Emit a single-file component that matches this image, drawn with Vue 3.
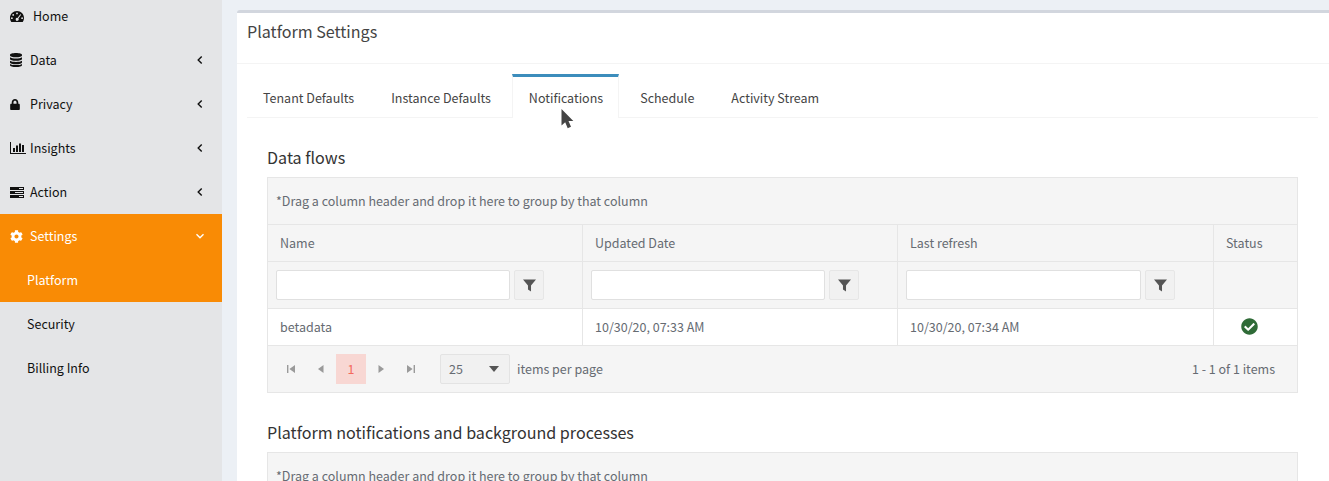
<template>
  <div class="layout">
    <aside class="sidebar">
      <ul class="menu">
        <li v-for="item in menu" :key="item.label" class="menu-item" :class="{ open: item.open, 'home-item': item.icon === 'home' }">
          <svg class="menu-icon" :viewBox="icons[item.icon].box" :style="{ width: icons[item.icon].w + 'px', height: icons[item.icon].h + 'px' }">
            <path :d="icons[item.icon].d" fill="currentColor" fill-rule="evenodd" />
          </svg>
          <span class="menu-label">{{ item.label }}</span>
          <svg v-if="item.arrow" class="menu-arrow" viewBox="0 0 10 10">
            <path :d="item.open ? 'M1.5 3.2 5 6.7 8.5 3.2' : 'M6.7 1.5 3.2 5 6.7 8.5'" fill="none" stroke="currentColor" stroke-width="1.4" />
          </svg>
        </li>
        <li v-for="sub in submenu" :key="sub" class="sub-item" :class="{ current: sub === 'Platform' }">{{ sub }}</li>
      </ul>
    </aside>

    <main class="content">
      <section class="box">
        <header class="box-header">Platform Settings</header>
        <div class="box-body">
          <nav class="tabs">
            <a v-for="tab in tabs" :key="tab" class="tab" :class="{ active: tab === 'Notifications' }">{{ tab }}</a>
          </nav>

          <div class="tab-pane">
            <h3 class="section-title">Data flows</h3>
            <div class="grid">
              <div class="group-hint">*Drag a column header and drop it here to group by that column</div>
              <div class="row head-row">
                <div v-for="col in columns" :key="col" class="cell">{{ col }}</div>
                <div class="cell">Status</div>
              </div>
              <div class="row filter-row">
                <div v-for="col in columns" :key="col" class="cell filter-cell">
                  <input class="filter-input" type="text" />
                  <button class="filter-btn">
                    <svg viewBox="0 0 12 12" width="13" height="13"><path d="M0 .5h12L7.4 6v5.5L4.6 9.6V6z" fill="#555" /></svg>
                  </button>
                </div>
                <div class="cell"></div>
              </div>
              <div class="row data-row">
                <div class="cell">betadata</div>
                <div class="cell">10/30/20, 07:33 AM</div>
                <div class="cell">10/30/20, 07:34 AM</div>
                <div class="cell status-cell">
                  <svg viewBox="0 0 512 512" width="17" height="17"><path :d="checkCircle" fill="#2f6b37" /></svg>
                </div>
              </div>
              <div class="pager">
                <div class="pager-nav">
                  <span class="page-icon"><svg viewBox="0 0 10 10"><path d="M1 1h1.4v8H1zM9 1v8L3.4 5z" /></svg></span>
                  <span class="page-icon"><svg viewBox="0 0 10 10"><path d="M7.5 1v8L2 5z" /></svg></span>
                  <span class="page-num">1</span>
                  <span class="page-icon"><svg viewBox="0 0 10 10"><path d="M2.5 1v8L8 5z" /></svg></span>
                  <span class="page-icon"><svg viewBox="0 0 10 10"><path d="M9 1H7.6v8H9zM1 1v8L6.6 5z" /></svg></span>
                </div>
                <div class="page-size">
                  <span class="pager-text">25</span>
                  <svg viewBox="0 0 10 6" width="10" height="6"><path d="M0 0h10L5 6z" fill="#555" /></svg>
                </div>
                <span class="per-page pager-text">items per page</span>
                <span class="page-info pager-text">1 - 1 of 1 items</span>
              </div>
            </div>

            <h3 class="section-title">Platform notifications and background processes</h3>
            <div class="grid">
              <div class="group-hint">*Drag a column header and drop it here to group by that column</div>
            </div>
          </div>
        </div>
      </section>
    </main>

    <svg class="cursor" viewBox="0 0 13 21" width="13" height="21">
      <path d="M.5 0v16.5l3.7-3.3 2.5 6 3.3-1.4-2.500-5.700 4.800-.2z" fill="#444" />
    </svg>
  </div>
</template>

<script setup>
const checkCircle = 'M504 256c0 136.967-111.033 248-248 248S8 392.967 8 256 119.033 8 256 8s248 111.033 248 248zM227.314 387.314l184-184c6.248-6.248 6.248-16.379 0-22.627l-22.627-22.627c-6.248-6.249-16.379-6.249-22.628 0L216 308.118l-70.059-70.059c-6.248-6.248-16.379-6.248-22.628 0l-22.627 22.627c-6.248 6.248-6.248 16.379 0 22.627l104 104c6.249 6.249 16.379 6.249 22.628.001z'

const icons = {
  home: {
    box: '0 0 14 11',
    w: 14,
    h: 11,
    d: 'M7 0C3.100 0 0 3.100 0 7c0 1.400.4 2.700 1.100 3.700.1.2.4.3.6.3h10.600c.2 0 .5-.1.6-.3C13.600 9.700 14 8.400 14 7c0-3.900-3.100-7-7-7zM7 1.500a.9.9 0 1 1 0 1.800.9.9 0 0 1 0-1.800zM3.200 3a.9.9 0 1 1 0 1.800.9.9 0 0 1 0-1.800zM1.900 6.300a.9.9 0 1 1 0 1.800.9.9 0 0 1 0-1.800zM12.100 6.300a.9.9 0 1 1 0 1.800.9.9 0 0 1 0-1.800zM10.300 3.300l.8.5-2.700 3.700a1.500 1.500 0 1 1-.9-.6z'
  },
  data: {
    box: '0 0 12 14',
    w: 12,
    h: 14,
    d: 'M6 0c3.300 0 6 .8 6 1.800v.7c0 1-2.700 1.800-6 1.800S0 3.500 0 2.500v-.7C0 .8 2.700 0 6 0zM0 4.300c1 .8 3.500 1.200 6 1.200s5-.4 6-1.200v1.700c0 1-2.700 1.800-6 1.800S0 7 0 6zM0 7.700c1 .8 3.500 1.200 6 1.200s5-.4 6-1.200v1.700c0 1-2.700 1.800-6 1.800S0 10.400 0 9.400zM0 10.900c1 .8 3.500 1.200 6 1.200s5-.4 6-1.200v1.300c0 1-2.700 1.800-6 1.800s-6-.8-6-1.800z'
  },
  privacy: {
    box: '0 0 448 512',
    w: 10,
    h: 11,
    d: 'M400 224h-24v-72C376 68.200 307.800 0 224 0S72 68.200 72 152v72H48c-26.500 0-48 21.500-48 48v192c0 26.500 21.500 48 48 48h352c26.500 0 48-21.500 48-48V272c0-26.500-21.500-48-48-48zm-104 0H152v-72c0-39.700 32.300-72 72-72s72 32.300 72 72v72z'
  },
  insights: {
    box: '0 0 16 12',
    w: 16,
    h: 12,
    d: 'M0 0h1v11h15v1H0zM3 6h2v4H3zM6 3.500h2V10H6zM9 1.500h2V10H9zM12 3h2v7h-2z'
  },
  action: {
    box: '0 0 14 11',
    w: 14,
    h: 11,
    d: 'M0 0h14v3H0zM9 1v1h4V1zM0 4h14v3H0zM5 5v1h8V5zM0 8h14v3H0zM9 9v1h4V9z'
  },
  settings: {
    box: '0 0 512 512',
    w: 13,
    h: 13,
    d: 'M487.400 315.700l-42.600-24.600c4.300-23.200 4.300-47 0-70.200l42.600-24.600c4.900-2.800 7.100-8.600 5.500-14-11.100-35.600-30-67.800-54.700-94.600-3.800-4.100-10-5.100-14.800-2.300L380.800 110c-17.900-15.400-38.500-27.300-60.800-35.100V25.800c0-5.600-3.900-10.500-9.400-11.700-36.700-8.200-74.300-7.800-109.200 0-5.500 1.200-9.400 6.100-9.400 11.700V75c-22.200 7.900-42.800 19.800-60.800 35.100L88.700 85.500c-4.900-2.800-11-1.900-14.800 2.300-24.700 26.700-43.600 58.900-54.700 94.600-1.700 5.400.6 11.200 5.500 14L67.300 221c-4.300 23.200-4.300 47 0 70.200l-42.600 24.600c-4.900 2.800-7.100 8.600-5.500 14 11.100 35.600 30 67.800 54.700 94.600 3.800 4.100 10 5.100 14.800 2.300l42.600-24.600c17.900 15.400 38.500 27.300 60.800 35.100v49.200c0 5.600 3.900 10.500 9.400 11.700 36.700 8.200 74.300 7.800 109.200 0 5.500-1.200 9.400-6.100 9.400-11.700v-49.200c22.200-7.900 42.800-19.800 60.800-35.100l42.600 24.600c4.900 2.800 11 1.900 14.800-2.300 24.700-26.700 43.600-58.900 54.700-94.600 1.500-5.500-.7-11.300-5.600-14.100zM256 336c-44.100 0-80-35.900-80-80s35.900-80 80-80 80 35.900 80 80-35.900 80-80 80z'
  }
}

const menu = [
  { label: 'Home', icon: 'home' },
  { label: 'Data', icon: 'data', arrow: true },
  { label: 'Privacy', icon: 'privacy', arrow: true },
  { label: 'Insights', icon: 'insights', arrow: true },
  { label: 'Action', icon: 'action', arrow: true },
  { label: 'Settings', icon: 'settings', arrow: true, open: true }
]
const submenu = ['Platform', 'Security', 'Billing Info']
const tabs = ['Tenant Defaults', 'Instance Defaults', 'Notifications', 'Schedule', 'Activity Stream']
const columns = ['Name', 'Updated Date', 'Last refresh']
</script>

<style>
html, body {
  margin: 0;
  height: 100%;
  overflow: hidden;
  background: #ecf0f5;
}
</style>

<style scoped>
.layout {
  position: relative;
  display: flex;
  height: 481px;
  overflow: hidden;
  background: #ecf0f5;
  font-family: "Noto Sans CJK SC", "Noto Sans", sans-serif;
  font-size: 12.5px;
  color: #666b72;
}

.sidebar {
  width: 222px;
  flex: none;
  background: #e4e5e7;
}

.menu {
  list-style: none;
  margin: -6px 0 0;
  padding: 0;
}

.menu-item {
  display: flex;
  align-items: center;
  height: 44px;
  padding: 0 17px 0 10px;
  color: #111;
}

.menu-item.open {
  background: #f98b05;
  color: #fff;
}

.menu-icon {
  flex: none;
}

.menu-label {
  position: absolute;
  left: 30px;
  line-height: 20px;
}

.home-item .menu-label {
  left: 33px;
}

.menu-arrow {
  width: 10px;
  height: 10px;
  margin-left: auto;
}

.sub-item {
  height: 44px;
  line-height: 44px;
  padding-left: 27px;
  color: #111;
}

.sub-item.current {
  background: #f98b05;
  color: #fff;
}

.content {
  flex: 1;
  min-width: 0;
  padding: 10px 0 0 15px;
}

.box {
  background: #fff;
  border-top: 3px solid #d2d6de;
  border-radius: 3px 0 0 0;
}

.box-header {
  height: 51px;
  padding: 8px 10px 0;
  box-sizing: border-box;
  border-bottom: 1px solid #f4f4f4;
  font-size: 16.1px;
  line-height: 20px;
  color: #444;
}

.box-body {
  padding: 10px 11px 0 10px;
}

.tabs {
  display: flex;
  height: 44px;
  box-sizing: border-box;
  border-bottom: 1px solid #f4f4f4;
}

.tab {
  height: 43px;
  box-sizing: border-box;
  margin-right: 5px;
  padding: 14px 16px 0;
  line-height: 20px;
  color: #444;
}

.tab.active {
  height: 44px;
  padding: 11px 15px 0 16px;
  border-top: 3px solid #3c8dbc;
  border-left: 1px solid #f4f4f4;
  border-right: 1px solid #f4f4f4;
  background: #fff;
}

.tab-pane {
  padding: 0 20px;
}

.section-title {
  margin: 0;
  height: 59px;
  padding-top: 26px;
  box-sizing: border-box;
  font-size: 16.1px;
  font-weight: 400;
  line-height: 26px;
  color: #333;
}

.grid {
  border: 1px solid #e6e6e6;
  background: #f5f5f5;
}

.group-hint {
  height: 46px;
  line-height: 46px;
  padding-left: 8px;
  box-sizing: border-box;
}

.row {
  display: grid;
  grid-template-columns: 315px 315px 316px 84px;
  box-sizing: border-box;
  border-top: 1px solid #e6e6e6;
}

.cell {
  display: flex;
  align-items: center;
  padding: 0 0 2px 12px;
  box-sizing: border-box;
  border-right: 1px solid #e6e6e6;
}

.cell:last-child {
  border-right: none;
}

.head-row {
  height: 37px;
}

.filter-row {
  height: 47px;
}

.filter-cell {
  padding: 0 38px 0 8px;
  gap: 4px;
}

.filter-input {
  flex: 1;
  min-width: 0;
  height: 30px;
  box-sizing: border-box;
  border: 1px solid #e0e0e0;
  border-radius: 2px;
  background: #fff;
  outline: none;
}

.filter-btn {
  display: flex;
  align-items: center;
  justify-content: center;
  flex: none;
  width: 30px;
  height: 30px;
  padding: 0;
  border: 1px solid #e6e6e6;
  border-radius: 2px;
  background: #f1f1f1;
}

.data-row {
  height: 37px;
  background: #fff;
}

.status-cell {
  padding-left: 27px;
}

.pager {
  display: flex;
  align-items: center;
  height: 47px;
  box-sizing: border-box;
  border-top: 1px solid #e6e6e6;
  padding: 0 22px 0 8px;
}

.pager-text {
  padding-bottom: 2px;
}

.pager-nav {
  display: flex;
  align-items: center;
}

.page-icon {
  display: flex;
  align-items: center;
  justify-content: center;
  width: 30px;
  height: 30px;
}

.page-icon svg {
  width: 10px;
  height: 10px;
  fill: #9a9a9a;
}

.page-num {
  width: 30px;
  height: 30px;
  line-height: 29px;
  text-align: center;
  background: #f8d7d3;
  color: #f4695c;
}

.page-size {
  display: flex;
  align-items: center;
  justify-content: space-between;
  width: 70px;
  height: 30px;
  margin-left: 14px;
  padding: 0 10px 0 8px;
  box-sizing: border-box;
  border: 1px solid #e3e3e3;
  border-radius: 2px;
  background: #f1f1f1;
}

.per-page {
  margin-left: 7px;
}

.page-info {
  margin-left: auto;
}

.cursor {
  position: absolute;
  left: 561px;
  top: 109px;
}
</style>
